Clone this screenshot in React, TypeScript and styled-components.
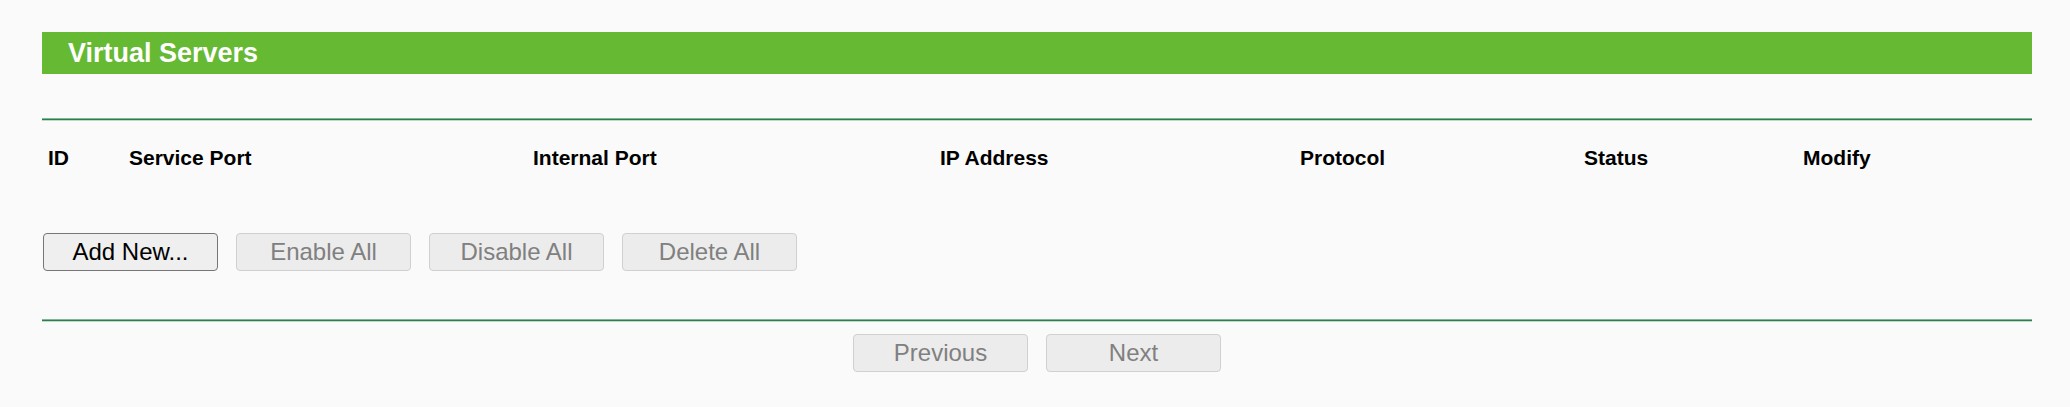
import { createGlobalStyle } from "styled-components";
import styled from "styled-components";

const GlobalStyle = createGlobalStyle`
  html, body {
    margin: 0;
    padding: 0;
    background: #fafafa;
    font-family: "Liberation Sans", Arial, sans-serif;
  }
`;

const columns = [
  { label: "ID", width: 81 },
  { label: "Service Port", width: 404 },
  { label: "Internal Port", width: 407 },
  { label: "IP Address", width: 360 },
  { label: "Protocol", width: 284 },
  { label: "Status", width: 219 },
  { label: "Modify", width: 235 },
];

export default function App() {
  return (
    <>
      <GlobalStyle />
      <Page>
        <TitleBar>Virtual Servers</TitleBar>
        <Rule $top={44} />
        <HeaderRow>
          {columns.map((col) => (
            <HeaderCell key={col.label} $width={col.width}>
              {col.label}
            </HeaderCell>
          ))}
        </HeaderRow>
        <ActionRow>
          <Button>Add New...</Button>
          <Button disabled>Enable All</Button>
          <Button disabled>Disable All</Button>
          <Button disabled>Delete All</Button>
        </ActionRow>
        <Rule $top={48} />
        <PagerRow>
          <Button disabled>Previous</Button>
          <Button disabled>Next</Button>
        </PagerRow>
      </Page>
    </>
  );
}

const Page = styled.div`
  width: 1990px;
  padding: 32px 0 0 42px;
`;

const TitleBar = styled.div`
  height: 42px;
  display: flex;
  align-items: center;
  padding-left: 26px;
  background: #66b933;
  color: #ffffff;
  font-size: 27px;
  font-weight: 700;
`;

const Rule = styled.div<{ $top: number }>`
  margin-top: ${({ $top }) => $top}px;
  height: 1px;
  border-top: 1px solid #7fb796;
  border-bottom: 1px solid #bcdac7;
  background: #2f7d4f;
`;

const HeaderRow = styled.div`
  display: flex;
  margin-top: 25px;
  height: 24px;
  align-items: center;
`;

const HeaderCell = styled.div<{ $width: number }>`
  width: ${({ $width }) => $width}px;
  flex: none;
  padding-left: 6px;
  box-sizing: border-box;
  font-size: 21px;
  font-weight: 700;
  color: #000000;
`;

const ActionRow = styled.div`
  display: flex;
  gap: 18px;
  margin-top: 63px;
  padding-left: 1px;
`;

const PagerRow = styled.div`
  display: flex;
  justify-content: center;
  gap: 18px;
  margin-top: 12px;
`;

const Button = styled.button`
  width: 175px;
  height: 38px;
  box-sizing: border-box;
  padding: 0;
  border: 1px solid #767676;
  border-radius: 4px;
  background: #efefef;
  color: #000000;
  font-family: "Liberation Sans", Arial, sans-serif;
  font-size: 24px;

  &:disabled {
    border-color: #d0d0d0;
    background: #ececec;
    color: #808080;
  }
`;
